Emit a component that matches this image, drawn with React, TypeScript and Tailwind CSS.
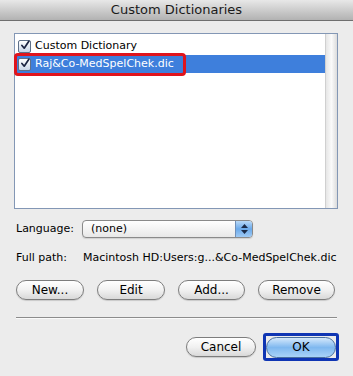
import React from "react";

function CheckBox() {
  return (
    <div className="w-[13px] h-[13px] border border-[#5f7088] bg-gradient-to-b from-[#ffffff] to-[#c9d6e8] rounded-[2px] flex items-center justify-center shrink-0">
      <svg width="13" height="13" viewBox="0 0 13 13" className="-mt-[2px] ml-[1px]">
        <path d="M2.5 6.5 L5.5 10 L11.5 1" fill="none" stroke="#1a2340" strokeWidth="2.2" strokeLinecap="round" strokeLinejoin="round" />
      </svg>
    </div>
  );
}

function AquaButton({ label, width }: { label: string; width: string }) {
  return (
    <div
      className={`${width} h-[20px] rounded-full border border-[#7d7d7d] bg-gradient-to-b from-[#ffffff] via-[#f1f1f1] to-[#d9d9d9] flex items-center justify-center text-[12px] text-black shadow-[0_1px_1px_rgba(0,0,0,0.15)]`}
    >
      {label}
    </div>
  );
}

export default function App() {
  return (
    <div
      className="w-[353px] h-[376px] bg-[#ececec] flex flex-col text-black overflow-hidden"
      style={{ fontFamily: '"DejaVu Sans", "Liberation Sans", sans-serif' }}
    >
      {/* Title bar */}
      <div className="h-[21px] shrink-0 bg-gradient-to-b from-[#e8e8e8] to-[#b2b2b2] border-b border-[#6f6f6f] flex items-center justify-center text-[13px] text-[#1a1a1a]">
        Custom Dictionaries
      </div>

      {/* Dictionary list */}
      <div className="relative mt-[12px] ml-[14px] w-[324px] h-[176px] border border-[#8397b5] bg-white flex shrink-0">
        <div className="flex-1 pt-[3px] pl-[2px]">
          <div className="h-[18px] flex items-center gap-[4px] pl-[1px] text-[11px]">
            <CheckBox />
            <span>Custom Dictionary</span>
          </div>
          <div className="h-[18px] flex items-center gap-[4px] pl-[1px] text-[11px] bg-[#3e7fdc] text-white">
            <CheckBox />
            <span>Raj&amp;Co-MedSpelChek.dic</span>
          </div>
        </div>
        <div className="w-[12px] bg-gradient-to-r from-[#e6e6e6] via-[#fafafa] to-[#dcdcdc] border-l border-[#d0d0d0]" />
        {/* red callout */}
        <div className="absolute left-[-1px] top-[19px] w-[172px] h-[23px] border-[3px] border-[#e0141c] rounded-[4px]" />
      </div>

      {/* Language */}
      <div className="mt-[11px] ml-[16px] flex items-center h-[18px] text-[11px]">
        <span className="w-[66px]">Language:</span>
        <div className="w-[171px] h-[18px] rounded-[4px] border border-[#8a8a8a] bg-gradient-to-b from-[#ffffff] to-[#e8e8e8] flex items-center overflow-hidden shadow-[0_1px_1px_rgba(0,0,0,0.12)]">
          <span className="flex-1 pl-[8px]">(none)</span>
          <div className="w-[17px] h-full bg-gradient-to-b from-[#b9d9f7] via-[#6aa9ea] to-[#9fcaf4] border-l border-[#6f8fb8] flex flex-col items-center justify-center gap-[2px]">
            <svg width="7" height="4" viewBox="0 0 7 4"><path d="M0 4 L3.5 0 L7 4 Z" fill="#1b2b48" /></svg>
            <svg width="7" height="4" viewBox="0 0 7 4"><path d="M0 0 L3.5 4 L7 0 Z" fill="#1b2b48" /></svg>
          </div>
        </div>
      </div>

      {/* Full path */}
      <div className="mt-[13px] ml-[16px] flex items-center h-[14px] text-[11px]">
        <span className="w-[67px]">Full path:</span>
        <span>Macintosh HD:Users:g...&amp;Co-MedSpelChek.dic</span>
      </div>

      {/* Action buttons */}
      <div className="mt-[15px] ml-[16px] flex gap-[13px]">
        <AquaButton label="New..." width="w-[68px]" />
        <AquaButton label="Edit" width="w-[68px]" />
        <AquaButton label="Add..." width="w-[67px]" />
        <AquaButton label="Remove" width="w-[77px]" />
      </div>

      {/* Separator */}
      <div className="mt-[17px] ml-[16px] w-[321px] h-[2px] border-t border-[#8c8c8c] border-b-[#fafafa] border-b" />

      {/* Dialog buttons */}
      <div className="mt-[14px] flex justify-end items-center pr-[14px] gap-[7px]">
        <AquaButton label="Cancel" width="w-[70px]" />
        <div className="w-[76px] h-[28px] border-[3px] border-[#0f35b3] rounded-[3px] flex items-center justify-center">
          <div className="w-[70px] h-[21px] rounded-full border border-[#4a6f9f] bg-gradient-to-b from-[#d4e8fb] via-[#7fb8ef] to-[#a9d3f8] flex items-center justify-center text-[12px] text-black">
            OK
          </div>
        </div>
      </div>
    </div>
  );
}
